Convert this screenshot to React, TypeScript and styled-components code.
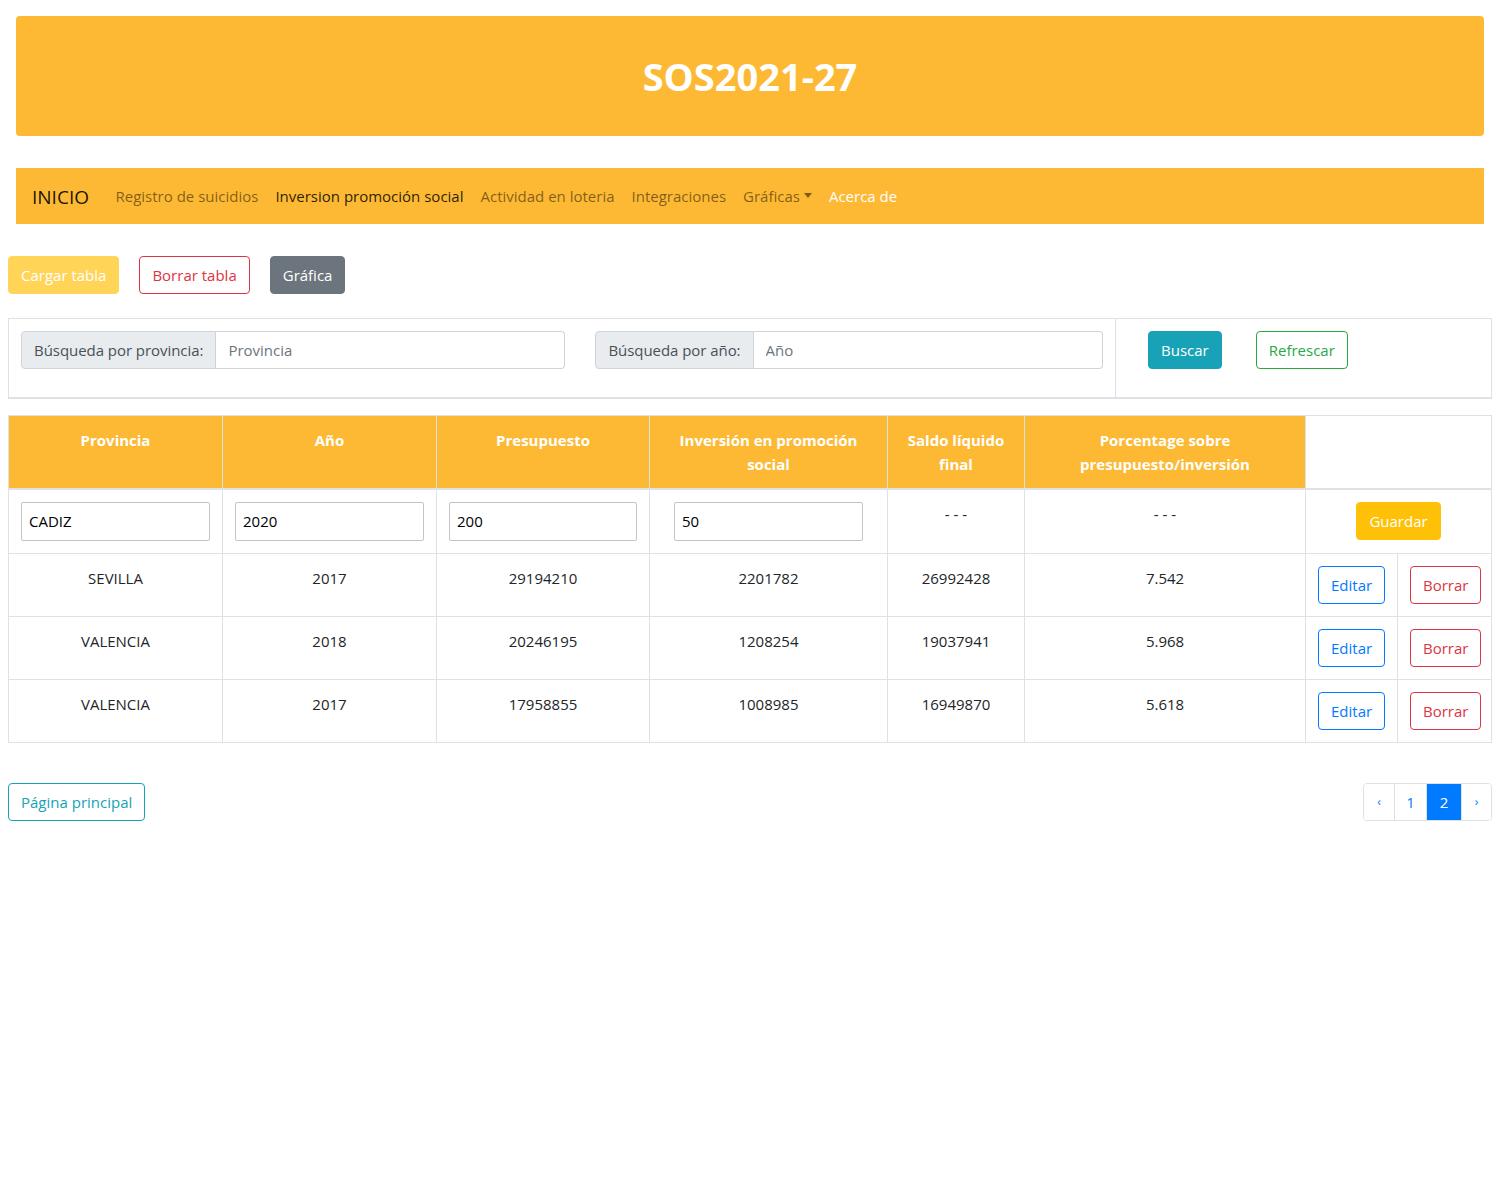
import React from 'react';
import styled, {createGlobalStyle, css} from 'styled-components';

const colors = {
    brand: '#fdb933',
    border: '#dee2e6',
    text: '#212529',
    primary: '#007bff',
    danger: '#dc3545',
    success: '#28a745',
    info: '#17a2b8',
    warning: '#ffc107',
    secondary: '#6c757d',
};

const GlobalStyle = createGlobalStyle`
  body {
    margin: 0;
    font-family: "Open Sans", "Noto Sans", sans-serif;
    font-size: 15px;
    line-height: 24px;
    color: ${colors.text};
    background: #fff;
  }
  * { box-sizing: border-box; }
`;

type Variant = 'warning' | 'outlineDanger' | 'secondary' | 'info' | 'outlineSuccess' | 'outlinePrimary' | 'outlineInfo' | 'guardar';

const rows = [
    {provincia: 'SEVILLA', year: 2017, presupuesto: '29194210', inversion: '2201782', saldo: '26992428', pct: '7.542'},
    {provincia: 'VALENCIA', year: 2018, presupuesto: '20246195', inversion: '1208254', saldo: '19037941', pct: '5.968'},
    {provincia: 'VALENCIA', year: 2017, presupuesto: '17958855', inversion: '1008985', saldo: '16949870', pct: '5.618'},
];

const widths = [214, 214, 213, 238, 137, 281];

export default function App() {
    return (
        <>
            <GlobalStyle/>
            <Page>
                <Banner>
                    <Title>SOS2021-27</Title>
                </Banner>
                <Navbar>
                    <Brand>INICIO</Brand>
                    <NavLink>Registro de suicidios</NavLink>
                    <NavLink $tone="active">Inversion promoción social</NavLink>
                    <NavLink>Actividad en loteria</NavLink>
                    <NavLink>Integraciones</NavLink>
                    <NavLink>Gráficas<Caret/></NavLink>
                    <NavLink $tone="light">Acerca de</NavLink>
                </Navbar>

                <Main>
                    <Toolbar>
                        <Button $variant="warning" disabled>Cargar tabla</Button>
                        <Button $variant="outlineDanger">Borrar tabla</Button>
                        <Button $variant="secondary">Gráfica</Button>
                    </Toolbar>

                    <SearchCard>
                        <SearchFields>
                            <InputGroup>
                                <Prepend>Búsqueda por provincia:</Prepend>
                                <GroupInput placeholder="Provincia"/>
                            </InputGroup>
                            <InputGroup>
                                <Prepend>Búsqueda por año:</Prepend>
                                <GroupInput placeholder="Año"/>
                            </InputGroup>
                        </SearchFields>
                        <SearchActions>
                            <Button $variant="info">Buscar</Button>
                            <Button $variant="outlineSuccess">Refrescar</Button>
                        </SearchActions>
                    </SearchCard>

                    <Table>
                        <colgroup>
                            {widths.map((w, i) => <col key={i} style={{width: w}}/>)}
                            <col style={{width: 92}}/>
                            <col/>
                        </colgroup>
                        <thead>
                        <tr>
                            <Th>Provincia</Th>
                            <Th>Año</Th>
                            <Th>Presupuesto</Th>
                            <Th>Inversión en promoción<br/>social</Th>
                            <Th>Saldo líquido<br/>final</Th>
                            <Th>Porcentage sobre<br/>presupuesto/inversión</Th>
                            <Th $blank colSpan={2}/>
                        </tr>
                        </thead>
                        <tbody>
                        <tr>
                            <Td><CellInput defaultValue="CADIZ"/></Td>
                            <Td><CellInput defaultValue="2020"/></Td>
                            <Td><CellInput defaultValue="200"/></Td>
                            <Td><CellInput defaultValue="50"/></Td>
                            <Td>- - -</Td>
                            <Td>- - -</Td>
                            <Td colSpan={2}><Button $variant="guardar">Guardar</Button></Td>
                        </tr>
                        {rows.map((r, i) => (
                            <tr key={i}>
                                <Td>{r.provincia}</Td>
                                <Td>{r.year}</Td>
                                <Td>{r.presupuesto}</Td>
                                <Td>{r.inversion}</Td>
                                <Td>{r.saldo}</Td>
                                <Td>{r.pct}</Td>
                                <Td $left><Button $variant="outlinePrimary">Editar</Button></Td>
                                <Td $left><Button $variant="outlineDanger">Borrar</Button></Td>
                            </tr>
                        ))}
                        </tbody>
                    </Table>

                    <Footer>
                        <Button $variant="outlineInfo">Página principal</Button>
                        <Pagination>
                            <PageItem $small $width={30}>‹</PageItem>
                            <PageItem $width={32}>1</PageItem>
                            <PageItem $active $width={35}>2</PageItem>
                            <PageItem $small $width={30}>›</PageItem>
                        </Pagination>
                    </Footer>
                </Main>
            </Page>
        </>
    );
}

const Page = styled.div`
  padding: 16px 16px 0;
`;

const Banner = styled.header`
  height: 120px;
  background: ${colors.brand};
  border-radius: 4px;
  display: flex;
  align-items: center;
  justify-content: center;
`;

const Title = styled.h1`
  margin: 0;
  color: #fff;
  font-size: 38px;
  font-weight: 700;
  line-height: 1;
`;

const Navbar = styled.nav`
  margin-top: 32px;
  height: 56px;
  background: ${colors.brand};
  display: flex;
  align-items: center;
  padding: 0 16px;
`;

const Brand = styled.span`
  font-size: 19px;
  color: rgba(0, 0, 0, .9);
  margin-right: 18px;
  padding-top: 2px;
`;

const NavLink = styled.a<{ $tone?: 'active' | 'light' }>`
  padding: 0 8.5px;
  color: ${p => p.$tone === 'active' ? 'rgba(0,0,0,.85)' : p.$tone === 'light' ? '#fff' : 'rgba(0,0,0,.5)'};
  display: flex;
  align-items: center;
  cursor: pointer;
`;

const Caret = styled.span`
  display: inline-block;
  margin-left: 4px;
  margin-top: -2px;
  border-top: 5px solid;
  border-left: 4.5px solid transparent;
  border-right: 4.5px solid transparent;
`;

const Main = styled.main`
  margin: 0 -8px;
`;

const Toolbar = styled.div`
  margin-top: 32px;
  display: flex;
  gap: 20px;
`;

const variants: Record<Variant, ReturnType<typeof css>> = {
    warning: css`background: #ffd457; border-color: #ffd457; color: #fff;`,
    guardar: css`background: ${colors.warning}; border-color: ${colors.warning}; color: #fff;`,
    secondary: css`background: ${colors.secondary}; border-color: ${colors.secondary}; color: #fff;`,
    info: css`background: ${colors.info}; border-color: ${colors.info}; color: #fff;`,
    outlineDanger: css`background: #fff; border-color: ${colors.danger}; color: ${colors.danger};`,
    outlineSuccess: css`background: #fff; border-color: ${colors.success}; color: ${colors.success};`,
    outlinePrimary: css`background: #fff; border-color: ${colors.primary}; color: ${colors.primary};`,
    outlineInfo: css`background: #fff; border-color: ${colors.info}; color: ${colors.info};`,
};

const Button = styled.button<{ $variant: Variant }>`
  font-family: inherit;
  font-size: 15px;
  line-height: 24px;
  height: 38px;
  padding: 6px 12px;
  border: 1px solid;
  border-radius: 4px;
  cursor: pointer;
  white-space: nowrap;
  ${p => variants[p.$variant]}
`;

const SearchCard = styled.div`
  margin-top: 24px;
  display: flex;
  border: 1px solid ${colors.border};
  border-bottom-width: 2px;
  height: 81px;
`;

const SearchFields = styled.div`
  width: 1107px;
  padding: 12px;
  display: flex;
  gap: 30px;
  border-right: 1px solid ${colors.border};
`;

const SearchActions = styled.div`
  flex: 1;
  padding: 12px 0 0 32px;
  display: flex;
  gap: 34px;
  align-items: flex-start;
`;

const InputGroup = styled.div`
  display: flex;
  height: 38px;
`;

const Prepend = styled.span`
  padding: 6px 12px;
  background: #e9ecef;
  border: 1px solid #ced4da;
  border-radius: 4px 0 0 4px;
  color: #495057;
  white-space: nowrap;
  letter-spacing: -0.05px;
`;

const GroupInput = styled.input`
  width: 349px;
  font-family: inherit;
  font-size: 15px;
  padding: 6px 12px;
  border: 1px solid #ced4da;
  border-left: 0;
  border-radius: 0 4px 4px 0;
  color: #495057;

  &::placeholder { color: #6c757d; }
`;

const Table = styled.table`
  margin-top: 16px;
  width: 100%;
  border-collapse: collapse;
  table-layout: fixed;
  border: 1px solid ${colors.border};
`;

const Th = styled.th<{ $blank?: boolean }>`
  padding: 12px;
  background: ${p => p.$blank ? '#fff' : colors.brand};
  color: #fff;
  font-weight: 700;
  font-size: 15px;
  text-align: center;
  vertical-align: top;
  border: 1px solid ${colors.border};
  border-bottom-width: 2px;
  height: 73px;
`;

const Td = styled.td<{ $left?: boolean }>`
  padding: 12px;
  text-align: ${p => p.$left ? 'left' : 'center'};
  vertical-align: top;
  border: 1px solid ${colors.border};
  height: 63px;
`;

const CellInput = styled.input`
  display: block;
  margin: 0 auto;
  width: 100%;
  max-width: 189px;
  height: 39px;
  padding: 0 7px 1px;
  font-family: inherit;
  font-size: 15px;
  color: #000;
  border: 1px solid #c4c4c4;
  border-radius: 2px;
`;

const Footer = styled.div`
  margin-top: 40px;
  display: flex;
  justify-content: space-between;
  align-items: center;
`;

const Pagination = styled.ul`
  margin: 0;
  padding: 0;
  list-style: none;
  display: flex;
  border: 1px solid ${colors.border};
  border-radius: 4px;
  overflow: hidden;
  height: 38px;
`;

const PageItem = styled.li<{ $active?: boolean; $small?: boolean; $width: number }>`
  display: flex;
  align-items: center;
  justify-content: center;
  width: ${p => p.$width}px;
  font-size: ${p => p.$small ? 12 : 15}px;
  color: ${p => p.$active ? '#fff' : colors.primary};
  background: ${p => p.$active ? colors.primary : '#fff'};
  & + & { border-left: 1px solid ${colors.border}; }
`;
